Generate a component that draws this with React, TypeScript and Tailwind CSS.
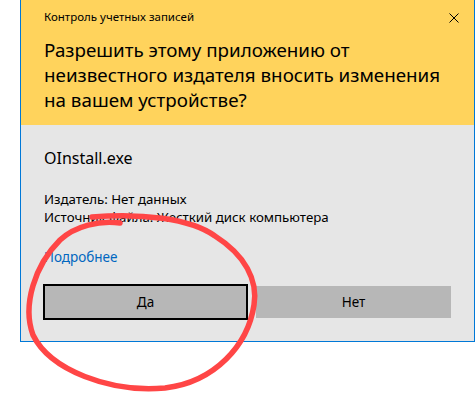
export default function App() {
  return (
    <div className="relative h-[409px] w-[476px] overflow-hidden bg-white font-['Noto_Sans','Open_Sans',sans-serif] text-black">
      <div className="ml-[20px] w-[455px] border-x border-b border-[#0078d7]">
        <header className="h-[125px] bg-[#ffd35c] pl-[23px] pr-[15px]">
          <div className="flex items-center justify-between pt-[9px]">
            <p className="text-[11.5px] leading-[16px]">Контроль учетных записей</p>
            <svg width="10" height="10" viewBox="0 0 10 10" className="mt-[1px]">
              <path d="M0.5 0.5 L9.5 9.5 M9.5 0.5 L0.5 9.5" stroke="#000" strokeWidth="1" />
            </svg>
          </div>
          <h1 className="mt-[13px] text-[18.8px] leading-[25px]">
            Разрешить этому приложению от неизвестного издателя вносить изменения на вашем устройстве?
          </h1>
        </header>

        <section className="h-[216px] bg-[#e6e6e6] pl-[23px] pr-[23px] pt-[23px]">
          <p className="text-[16px] leading-[20px]">OInstall.exe</p>
          <div className="mt-[22px] text-[13.3px] leading-[18px]">
            <p>Издатель: Нет данных</p>
            <p>Источник файла: Жесткий диск компьютера</p>
          </div>
          <a className="mt-[23px] block text-[13.5px] leading-[16px] text-[#0067c0]">Подробнее</a>
          <div className="mt-[19px] flex items-center gap-[8px]">
            <button className="-ml-[1px] h-[36px] w-[205px] border-2 border-black bg-[#b7b7b7] text-[13.5px]">Да</button>
            <button className="h-[32px] w-[195px] bg-[#b7b7b7] text-[13.5px]">Нет</button>
          </div>
        </section>
      </div>

      <svg className="pointer-events-none absolute left-0 top-0" width="476" height="409" viewBox="0 0 476 409">
        <path
          d="M 92 217 C 140 213, 190 218, 215 236 C 245 255, 258 280, 254 305 C 248 345, 215 382, 165 388 C 110 393, 50 370, 33 335 C 22 305, 35 265, 60 240 C 75 226, 100 220, 120 223"
          fill="none"
          stroke="#ff4646"
          strokeWidth="5.5"
          strokeLinecap="round"
        />
      </svg>
    </div>
  );
}
